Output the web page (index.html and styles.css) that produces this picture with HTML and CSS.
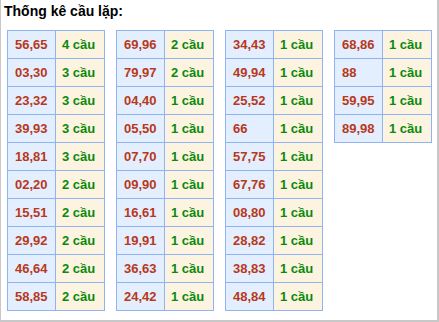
FILE: index.html
```html
<!DOCTYPE html>
<html>
<head>
<meta charset="utf-8">
<link rel="stylesheet" href="styles.css">
</head>
<body>
<div class="box">
  <div class="title">Thống kê cầu lặp:</div>
  <div class="tables">
    <table class="tk">
      <tr><td class="n">56,65</td><td class="c">4 cầu</td></tr>
      <tr><td class="n">03,30</td><td class="c">3 cầu</td></tr>
      <tr><td class="n">23,32</td><td class="c">3 cầu</td></tr>
      <tr><td class="n">39,93</td><td class="c">3 cầu</td></tr>
      <tr><td class="n">18,81</td><td class="c">3 cầu</td></tr>
      <tr><td class="n">02,20</td><td class="c">2 cầu</td></tr>
      <tr><td class="n">15,51</td><td class="c">2 cầu</td></tr>
      <tr><td class="n">29,92</td><td class="c">2 cầu</td></tr>
      <tr><td class="n">46,64</td><td class="c">2 cầu</td></tr>
      <tr><td class="n">58,85</td><td class="c">2 cầu</td></tr>
    </table>
    <table class="tk">
      <tr><td class="n">69,96</td><td class="c">2 cầu</td></tr>
      <tr><td class="n">79,97</td><td class="c">2 cầu</td></tr>
      <tr><td class="n">04,40</td><td class="c">1 cầu</td></tr>
      <tr><td class="n">05,50</td><td class="c">1 cầu</td></tr>
      <tr><td class="n">07,70</td><td class="c">1 cầu</td></tr>
      <tr><td class="n">09,90</td><td class="c">1 cầu</td></tr>
      <tr><td class="n">16,61</td><td class="c">1 cầu</td></tr>
      <tr><td class="n">19,91</td><td class="c">1 cầu</td></tr>
      <tr><td class="n">36,63</td><td class="c">1 cầu</td></tr>
      <tr><td class="n">24,42</td><td class="c">1 cầu</td></tr>
    </table>
    <table class="tk">
      <tr><td class="n">34,43</td><td class="c">1 cầu</td></tr>
      <tr><td class="n">49,94</td><td class="c">1 cầu</td></tr>
      <tr><td class="n">25,52</td><td class="c">1 cầu</td></tr>
      <tr><td class="n">66</td><td class="c">1 cầu</td></tr>
      <tr><td class="n">57,75</td><td class="c">1 cầu</td></tr>
      <tr><td class="n">67,76</td><td class="c">1 cầu</td></tr>
      <tr><td class="n">08,80</td><td class="c">1 cầu</td></tr>
      <tr><td class="n">28,82</td><td class="c">1 cầu</td></tr>
      <tr><td class="n">38,83</td><td class="c">1 cầu</td></tr>
      <tr><td class="n">48,84</td><td class="c">1 cầu</td></tr>
    </table>
    <table class="tk">
      <tr><td class="n">68,86</td><td class="c">1 cầu</td></tr>
      <tr><td class="n">88</td><td class="c">1 cầu</td></tr>
      <tr><td class="n">59,95</td><td class="c">1 cầu</td></tr>
      <tr><td class="n">89,98</td><td class="c">1 cầu</td></tr>
    </table>
  </div>
</div>
</body>
</html>
```
FILE: styles.css
```css
html, body {
  margin: 0;
  padding: 0;
  background: #ffffff;
}
.box {
  box-sizing: border-box;
  width: 439px;
  height: 322px;
  border-left: 1px solid #c8c8c8;
  border-right: 2px solid #c8c8c8;
  border-bottom: 2px solid #c8c8c8;
  font-family: "Liberation Sans", Arial, sans-serif;
}
.title {
  font-size: 14px;
  font-weight: bold;
  line-height: 18px;
  color: #000;
  padding: 2px 0 0 3px;
  margin-bottom: 10px;
}
.tables {
  display: flex;
  align-items: flex-start;
  gap: 11px;
  padding-left: 6px;
}
.tk {
  border-collapse: collapse;
  table-layout: fixed;
  width: 98px;
}
.tk td {
  border: 1px solid #8fb4f4;
  height: 27px;
  padding: 0 0 0 7px;
  font-size: 13px;
  font-weight: bold;
  white-space: nowrap;
}
.tk td.n {
  width: 40px;
  background: #e3eeff;
  color: #b8381a;
}
.tk td.c {
  background: #fdf3e1;
  color: #0a8a0a;
  padding-left: 6px;
}
```
